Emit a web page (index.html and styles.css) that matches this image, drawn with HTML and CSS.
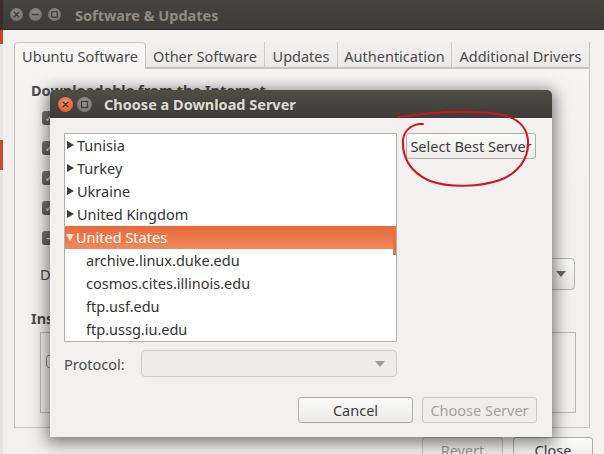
FILE: index.html
```html
<!DOCTYPE html>
<html>
<head>
<meta charset="utf-8">
<title>Software &amp; Updates</title>
<link rel="stylesheet" href="styles.css">
</head>
<body>
<div class="screen">
  <div class="edge"></div>
  <div class="main-window">
    <div class="titlebar">
      <div class="wbtns">
        <span class="wbtn"><svg width="13" height="13" viewBox="0 0 13 13"><path d="M4.3 4.3l4.4 4.4M8.7 4.3l-4.4 4.4" stroke="#3c3b37" stroke-width="1.5" stroke-linecap="round"/></svg></span>
        <span class="wbtn"><svg width="13" height="13" viewBox="0 0 13 13"><path d="M3.8 6.5h5.4" stroke="#3c3b37" stroke-width="1.5" stroke-linecap="round"/></svg></span>
        <span class="wbtn"><svg width="13" height="13" viewBox="0 0 13 13"><rect x="3.8" y="3.8" width="5.4" height="5.4" fill="none" stroke="#3c3b37" stroke-width="1.2"/></svg></span>
      </div>
      <div class="win-title">Software &amp; Updates</div>
    </div>
    <div class="main-body">
      <div class="tabs">
        <div class="tab tab-active tab-w1">Ubuntu Software</div>
        <div class="tab tab-w2">Other Software</div>
        <div class="tab tab-w3">Updates</div>
        <div class="tab tab-w4">Authentication</div>
        <div class="tab tab-w5">Additional Drivers</div>
      </div>
      <div class="panel">
        <div class="section-title">Downloadable from the Internet</div>
        <div class="check-list">
          <div class="check-row"><span class="checkbox">&#10003;</span></div>
          <div class="check-row"><span class="checkbox">&#10003;</span></div>
          <div class="check-row"><span class="checkbox">&#10003;</span></div>
          <div class="check-row"><span class="checkbox">&#10003;</span></div>
          <div class="check-row"><span class="checkbox">&#8211;</span></div>
        </div>
        <div class="download-row">
          <span class="download-label">Download from:</span>
          <div class="main-combo"><span class="arrow"></span></div>
        </div>
        <div class="section-title section-cd">Installable from CD-ROM/DVD</div>
        <div class="cd-frame"><span class="cd-check"></span></div>
      </div>
      <div class="main-actions">
        <div class="btn btn-revert">Revert</div>
        <div class="btn btn-close">Close</div>
      </div>
    </div>
  </div>

  <div class="dialog">
    <div class="dlg-titlebar">
      <span class="dbtn dbtn-close"><svg width="15" height="15" viewBox="0 0 15 15"><path d="M5.2 5.2l4.6 4.6M9.8 5.2l-4.6 4.6" stroke="#3c3b37" stroke-width="1.5" stroke-linecap="round"/></svg></span>
      <span class="dbtn dbtn-max"><svg width="15" height="15" viewBox="0 0 15 15"><rect x="4.5" y="4.5" width="6" height="6" fill="none" stroke="#3c3b37" stroke-width="1.2"/></svg></span>
      <div class="dlg-title">Choose a Download Server</div>
    </div>
    <div class="dlg-body">
      <div class="tree">
        <div class="row"><span class="expander exp-right"></span>Tunisia</div>
        <div class="row"><span class="expander exp-right"></span>Turkey</div>
        <div class="row"><span class="expander exp-right"></span>Ukraine</div>
        <div class="row"><span class="expander exp-right"></span>United Kingdom</div>
        <div class="row row-selected"><span class="expander exp-down"></span>United States</div>
        <div class="row row-child">archive.linux.duke.edu</div>
        <div class="row row-child">cosmos.cites.illinois.edu</div>
        <div class="row row-child">ftp.usf.edu</div>
        <div class="row row-child">ftp.ussg.iu.edu</div>
        <span class="scroll-thumb"></span>
      </div>
      <div class="side">
        <div class="btn btn-best">Select Best Server</div>
      </div>
      <div class="protocol-row">
        <span class="protocol-label">Protocol:</span>
        <div class="combo-disabled"><span class="arrow arrow-light"></span></div>
      </div>
      <div class="dlg-actions">
        <div class="btn btn-dlg">Cancel</div>
        <div class="btn btn-dlg btn-disabled">Choose Server</div>
      </div>
    </div>
  </div>

  <svg class="annotation" width="604" height="454" viewBox="0 0 604 454">
    <path d="M423,124 C414,123 404,129 403,140 C402,156 409,172 430,181 C450,188 480,187 500,180 C518,173 529,159 528,141 C527,124 515,115 490,113 C465,111 430,112 398,117" fill="none" stroke="#d3141b" stroke-width="2" stroke-linecap="round" stroke-linejoin="round"/>
  </svg>
</div>
</body>
</html>
```

FILE: styles.css
```css
* { box-sizing: border-box; }

html, body {
  margin: 0;
  padding: 0;
}

body {
  width: 604px;
  height: 454px;
  overflow: hidden;
  font-family: "Noto Sans", "DejaVu Sans", sans-serif;
  font-size: 14.5px;
  color: #3c3c3c;
  background: #2c2b28;
}

.screen {
  position: relative;
  width: 604px;
  height: 454px;
  display: flex;
  overflow: hidden;
}

.edge {
  width: 3px;
  flex: none;
  background: linear-gradient(to bottom, #3a2c28 0, #3a2c28 30px, #c9452c 30px, #c9452c 44px, #e9e7e4 44px, #e9e7e4 140px, #c84b2f 140px, #c84b2f 170px, #e6e4e1 170px, #e6e4e1 100%);
}

.main-window {
  flex: 1;
  display: flex;
  flex-direction: column;
  background: #f2f1f0;
  min-width: 0;
}

.titlebar {
  height: 30px;
  flex: none;
  display: flex;
  align-items: center;
  background: linear-gradient(to bottom, #45443f, #3c3b37);
  border-bottom: 1px solid #2f2e2b;
  padding-left: 7px;
}

.wbtns {
  display: flex;
  gap: 6px;
}

.wbtn {
  width: 13px;
  height: 13px;
  border-radius: 50%;
  background: radial-gradient(circle at 50% 35%, #8e8b85, #6f6c67);
  display: flex;
}

.win-title {
  margin-left: 14px;
  font-weight: bold;
  font-size: 14.5px;
  color: #908c85;
}

.main-body {
  flex: 1;
  display: flex;
  flex-direction: column;
  padding: 12px 0 0 11px;
}

.tabs {
  display: flex;
  height: 26px;
  align-items: stretch;
  position: relative;
  z-index: 1;
}

.tab {
  display: flex;
  align-items: center;
  justify-content: center;
  padding-top: 3px;
  color: #4a4a4a;
  border-right: 1px solid #cfccc7;
  border-bottom: 1px solid #c6c3be;
  background: linear-gradient(to bottom, #f2f1f0, #ebeae8);
  white-space: nowrap;
}

.tab-active {
  background: #f6f5f4;
  border: 1px solid #c6c3be;
  border-bottom: none;
  border-radius: 4px 4px 0 0;
  padding-top: 0;
  margin-bottom: -1px;
  height: 27px;
}

.tab-w1 { width: 132px; }
.tab-w2 { width: 119px; }
.tab-w3 { width: 73px; }
.tab-w4 { width: 114px; }
.tab-w5 { width: 138px; border-right: 1px solid #c6c3be; }

.panel {
  width: 576px;
  height: 360px;
  flex: none;
  border: 1px solid #c6c3be;
  background: linear-gradient(to bottom, #f6f5f4, #f2f1f0 120px);
  padding: 12px 14px 0 16px;
  display: flex;
  flex-direction: column;
}

.section-title {
  font-weight: bold;
  color: #4c4c4c;
  height: 18px;
  line-height: 18px;
  white-space: nowrap;
}

.check-list {
  margin-top: 4px;
  display: flex;
  flex-direction: column;
  padding-left: 11px;
}

.check-row {
  height: 30px;
  display: flex;
  align-items: center;
}

.checkbox {
  width: 14px;
  height: 14px;
  border-radius: 3px;
  background: linear-gradient(to bottom, #7d7a75, #66635e);
  color: #e8e6e3;
  font-size: 11px;
  line-height: 14px;
  text-align: center;
  font-weight: bold;
}

.download-row {
  margin-top: 5px;
  height: 32px;
  display: flex;
  align-items: center;
  justify-content: space-between;
  padding-left: 9px;
}

.download-label {
  color: #4a4a4a;
  white-space: nowrap;
}

.main-combo {
  width: 300px;
  height: 32px;
  border: 1px solid #b6b3ae;
  border-radius: 4px;
  background: linear-gradient(to bottom, #f7f7f6, #e9e8e6);
  display: flex;
  align-items: center;
  justify-content: flex-end;
  padding: 0 8px 0 10px;
}

.arrow {
  width: 0;
  height: 0;
  border-left: 5px solid transparent;
  border-right: 5px solid transparent;
  border-top: 6px solid #6a6864;
}

.arrow-light {
  border-top-color: #9c9a96;
}

.section-cd {
  margin-top: 19px;
}

.cd-frame {
  margin-top: 5px;
  margin-left: 9px;
  width: 536px;
  height: 81px;
  border: 1px solid #b9b6b1;
  background: #f2f1f0;
  padding: 22px 0 0 5px;
}

.cd-check {
  display: block;
  width: 12px;
  height: 13px;
  border: 1px solid #8f8c87;
  border-radius: 3px;
  background: #f4f3f2;
}

.main-actions {
  display: flex;
  gap: 10px;
  margin-top: 9px;
  padding-left: 408px;
}

.btn {
  display: flex;
  align-items: center;
  justify-content: center;
  border: 1px solid #b0ada8;
  border-radius: 3px;
  background: linear-gradient(to bottom, #fbfbfa, #ecebea);
  color: #3c3c3c;
  white-space: nowrap;
}

.btn-revert {
  width: 81px;
  height: 26px;
  color: #9a9894;
  background: #efeeec;
  border-color: #c6c3bf;
}

.btn-close {
  width: 80px;
  height: 26px;
}

/* Dialog */
.dialog {
  position: absolute;
  left: 50px;
  top: 90px;
  width: 502px;
  height: 347px;
  display: flex;
  flex-direction: column;
  border-radius: 5px 5px 0 0;
  box-shadow: 0 3px 16px 3px rgba(0, 0, 0, 0.5);
  z-index: 5;
}

.dlg-titlebar {
  height: 28px;
  flex: none;
  display: flex;
  align-items: center;
  padding-left: 8px;
  gap: 4px;
  border-radius: 5px 5px 0 0;
  background: linear-gradient(to bottom, #4f4d48, #3c3b37);
}

.dbtn {
  width: 15px;
  height: 15px;
  border-radius: 50%;
  display: flex;
}

.dbtn-close {
  background: radial-gradient(circle at 50% 35%, #f7936a, #df4b1c);
}

.dbtn-max {
  background: radial-gradient(circle at 50% 35%, #96938d, #75726d);
}

.dlg-title {
  margin-left: 8px;
  font-weight: bold;
  color: #dfdbd2;
}

.dlg-body {
  flex: 1;
  background: #f2f1f0;
  display: grid;
  grid-template-columns: 333px 130px;
  grid-template-rows: 209px auto auto;
  align-content: start;
  column-gap: 9px;
  padding: 15px 16px 0 14px;
}

.tree {
  position: relative;
  background: #ffffff;
  border: 1px solid #b3b1ad;
  overflow: hidden;
}

.row {
  height: 23px;
  display: flex;
  align-items: center;
  padding-left: 12px;
  padding-bottom: 1px;
  white-space: nowrap;
  color: #333333;
}

.expander {
  width: 0;
  height: 0;
  margin-left: -10px;
  margin-right: 3px;
}

.exp-right {
  border-top: 4.5px solid transparent;
  border-bottom: 4.5px solid transparent;
  border-left: 7px solid #3c3c3c;
}

.exp-down {
  border-left: 4.5px solid transparent;
  border-right: 4.5px solid transparent;
  border-top: 7px solid #fde4d6;
  margin-left: -11px;
  margin-right: 2px;
}

.row-selected {
  background: linear-gradient(to bottom, #e8683a, #f08a5a);
  color: #ffffff;
}

.row-child {
  padding-left: 21px;
}

.scroll-thumb {
  position: absolute;
  right: 0;
  top: 92px;
  width: 3px;
  height: 29px;
  background: #ec6f3f;
}

.side {
  display: flex;
  flex-direction: column;
}

.btn-best {
  height: 26px;
  width: 130px;
}

.protocol-row {
  grid-column: 1;
  margin-top: 8px;
  display: flex;
  align-items: center;
}

.protocol-label {
  width: 77px;
  color: #4a4a4a;
}

.combo-disabled {
  flex: 1;
  height: 27px;
  border: 1px solid #cfccc8;
  border-radius: 4px;
  background: #eeedeb;
  display: flex;
  align-items: center;
  justify-content: flex-end;
  padding-right: 11px;
}

.dlg-actions {
  grid-column: 1 / span 2;
  margin-top: 20px;
  display: flex;
  justify-content: flex-end;
  gap: 9px;
  margin-right: -1px;
}

.btn-dlg {
  width: 115px;
  height: 26px;
}

.btn-disabled {
  color: #a3a19d;
  background: #efeeec;
  border-color: #cac7c3;
}

.annotation {
  position: absolute;
  left: 0;
  top: 0;
  z-index: 10;
  pointer-events: none;
}
```
